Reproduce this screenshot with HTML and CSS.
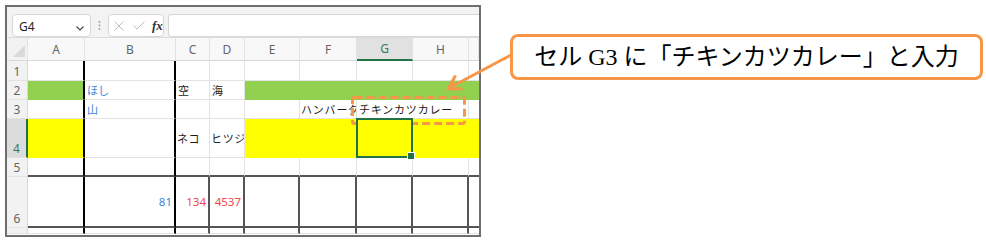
FILE: index.html
```html
<!DOCTYPE html>
<html lang="ja">
  <head>
    <meta charset="UTF-8" />
    <meta name="viewport" content="width=device-width, initial-scale=1.0" />
    <title>セル G3 に入力</title>
    <link rel="stylesheet" href="styles.css">
  </head>
  <body>
    <div class="frame">
      <div class="toolbar">
        <div class="namebox">
          <span class="namebox__text">G4</span>
          <svg class="namebox__chevron" width="8" height="5" viewBox="0 0 8 5">
            <polyline points="0.5,0.5 4,4 7.5,0.5" fill="none" stroke="#444" stroke-width="1.1" />
          </svg>
        </div>
        <div class="grip">
          <svg width="3" height="9" viewBox="0 0 3 9">
            <circle cx="1.5" cy="1" r="0.9" fill="#9a9a9a" />
            <circle cx="1.5" cy="4.5" r="0.9" fill="#9a9a9a" />
            <circle cx="1.5" cy="8" r="0.9" fill="#9a9a9a" />
          </svg>
        </div>
        <div class="fxbox">
          <svg width="10" height="10" viewBox="0 0 10 10">
            <path d="M0.5 0.5 L9.5 9.5 M9.5 0.5 L0.5 9.5" stroke="#bdbdbd" stroke-width="1" />
          </svg>
          <svg width="12" height="9" viewBox="0 0 12 9">
            <polyline points="0.5,4.5 4,8 11.5,0.5" fill="none" stroke="#bdbdbd" stroke-width="1" />
          </svg>
          <span class="fxbox__fx">fx</span>
        </div>
        <div class="formula"></div>
      </div>

      <div class="sheet">
        <!-- column headers -->
        <div class="hdr hdr--corner">
          <svg width="12" height="12" viewBox="0 0 12 12"><polygon points="12,0 12,12 0,12" fill="#dadada" /></svg>
        </div>
        <div class="hdr">A</div>
        <div class="hdr">B</div>
        <div class="hdr">C</div>
        <div class="hdr">D</div>
        <div class="hdr">E</div>
        <div class="hdr">F</div>
        <div class="hdr hdr--active">G</div>
        <div class="hdr">H</div>
        <div class="hdr"></div>

        <!-- row 1 -->
        <div class="rh">1</div>
        <div class="cell cell--a"></div>
        <div class="cell cell--b"></div>
        <div class="cell"></div>
        <div class="cell"></div>
        <div class="cell"></div>
        <div class="cell"></div>
        <div class="cell"></div>
        <div class="cell"></div>
        <div class="cell cell--last"></div>

        <!-- row 2 -->
        <div class="rh">2</div>
        <div class="cell cell--green cell--a"></div>
        <div class="cell cell--b cell--blue">ほし</div>
        <div class="cell">空</div>
        <div class="cell">海</div>
        <div class="cell cell--green"></div>
        <div class="cell cell--green"></div>
        <div class="cell cell--green"></div>
        <div class="cell cell--green"></div>
        <div class="cell cell--green cell--last"></div>

        <!-- row 3 -->
        <div class="rh">3</div>
        <div class="cell cell--a"></div>
        <div class="cell cell--b cell--blue">山</div>
        <div class="cell"></div>
        <div class="cell"></div>
        <div class="cell"></div>
        <div class="cell cell--kana">ハンバーグ</div>
        <div class="cell cell--kana cell--spill">チキンカツカレー</div>
        <div class="cell"></div>
        <div class="cell cell--last"></div>

        <!-- row 4 -->
        <div class="rh rh--active">4</div>
        <div class="cell cell--yellow cell--a"></div>
        <div class="cell cell--b"></div>
        <div class="cell cell--kana">ネコ</div>
        <div class="cell cell--kana">ヒツジ</div>
        <div class="cell cell--yellow"></div>
        <div class="cell cell--yellow"></div>
        <div class="cell cell--yellow cell--active"></div>
        <div class="cell cell--yellow"></div>
        <div class="cell cell--yellow cell--last"></div>

        <!-- row 5 -->
        <div class="rh">5</div>
        <div class="cell cell--edge cell--a"></div>
        <div class="cell cell--edge cell--b"></div>
        <div class="cell cell--edge"></div>
        <div class="cell cell--edge"></div>
        <div class="cell cell--edge"></div>
        <div class="cell cell--edge"></div>
        <div class="cell cell--edge"></div>
        <div class="cell cell--edge"></div>
        <div class="cell cell--edge cell--last"></div>

        <!-- row 6 -->
        <div class="rh">6</div>
        <div class="cell cell--boxed cell--a"></div>
        <div class="cell cell--boxed cell--b cell--num cell--blue">81</div>
        <div class="cell cell--boxed cell--num cell--red">134</div>
        <div class="cell cell--boxed cell--num cell--red">4537</div>
        <div class="cell cell--boxed"></div>
        <div class="cell cell--boxed"></div>
        <div class="cell cell--boxed"></div>
        <div class="cell cell--boxed"></div>
        <div class="cell cell--boxed cell--last"></div>

        <!-- row 7 (cut off) -->
        <div class="rh"></div>
        <div class="cell cell--tail cell--a"></div>
        <div class="cell cell--tail cell--b"></div>
        <div class="cell cell--tail"></div>
        <div class="cell cell--tail"></div>
        <div class="cell cell--tail"></div>
        <div class="cell cell--tail"></div>
        <div class="cell cell--tail"></div>
        <div class="cell cell--tail"></div>
        <div class="cell cell--tail cell--last"></div>
      </div>
    </div>

    <div class="callout">セル G3 に「チキンカツカレー」と入力</div>

    <svg class="marks" width="986" height="241" viewBox="0 0 986 241">
      <rect x="352.5" y="97.5" width="112" height="26" rx="2" fill="none"
        stroke="#f79646" stroke-width="3" stroke-dasharray="8 4" />
      <line x1="511" y1="55" x2="449" y2="88" stroke="#f79646" stroke-width="3" />
      <polyline points="455.5,75.5 448.5,88.5 462.5,89" fill="none" stroke="#f79646"
        stroke-width="3" stroke-linejoin="miter" />
    </svg>
  </body>
</html>
```

FILE: styles.css
```css
* {
  margin: 0;
  padding: 0;
  box-sizing: border-box;
}
body {
  background: #fff;
  width: 986px;
  height: 241px;
  overflow: hidden;
  font-family: "Noto Sans CJK JP", sans-serif;
}

.frame {
  margin: 5px 0 0 5px;
  width: 476px;
  height: 232px;
  border: 2px solid #6e6e6e;
  overflow: hidden;
  background: #fff;
}

/* formula bar */
.toolbar {
  display: flex;
  align-items: flex-start;
  height: 31px;
  padding: 7px 0 0 5px;
  background: #f3f3f3;
  border-bottom: 1px solid #dcdcdc;
}
.namebox {
  width: 79px;
  height: 23px;
  display: flex;
  align-items: flex-end;
  justify-content: space-between;
  padding: 0 6px 3px 6px;
  background: #fff;
  border: 1px solid #d6d6d6;
  border-radius: 4px;
}
.namebox__text {
  font-family: "Noto Sans", sans-serif;
  font-size: 12px;
  line-height: 1;
  color: #262626;
}
.namebox__chevron {
  margin-bottom: 2px;
}
.grip {
  width: 17px;
  height: 23px;
  display: flex;
  align-items: center;
  justify-content: center;
}
.fxbox {
  width: 56px;
  height: 23px;
  display: flex;
  align-items: center;
  gap: 9px;
  padding-left: 5px;
  background: #fff;
  border: 1px solid #d6d6d6;
  border-radius: 4px;
}
.fxbox__fx {
  font-family: "Liberation Serif", serif;
  font-style: italic;
  font-weight: bold;
  font-size: 13px;
  line-height: 1;
  color: #333;
  margin-left: -2px;
}
.formula {
  flex: 1;
  height: 23px;
  margin-left: 4px;
  background: #fff;
  border: 1px solid #d6d6d6;
  border-right: none;
  border-radius: 4px 0 0 4px;
}

/* grid */
.sheet {
  display: grid;
  grid-template-columns: 21px 57px 91px 34px 35px 55px 57px 56px 56px 10px;
  grid-template-rows: 23px 20px 19px 19px 39px 19px 51px 6px;
}
.hdr {
  display: flex;
  align-items: center;
  justify-content: center;
  font-family: "Noto Sans", sans-serif;
  font-size: 12px;
  color: #666;
  background: #f8f8f8;
  border-right: 1px solid #e2e2e2;
  border-bottom: 1px solid #d8d8d8;
}
.hdr--corner {
  align-items: flex-end;
  justify-content: flex-end;
  padding: 0 2px 3px 0;
  background: #f2f2f2;
}
.hdr--active {
  background: #e1e1e1;
  color: #3d7a58;
  border-bottom: 2px solid #217346;
}
.rh {
  display: flex;
  align-items: flex-end;
  justify-content: center;
  padding-bottom: 2px;
  font-family: "Noto Sans", sans-serif;
  font-size: 12px;
  line-height: 1;
  color: #666;
  background: #f2f2f2;
  border-right: 1px solid #d8d8d8;
  border-bottom: 1px solid #e2e2e2;
}
.rh--active {
  background: #dcdcdc;
  color: #3d7a58;
  border-right: 2px solid #217346;
}

.cell {
  display: flex;
  align-items: center;
  padding: 0 2px;
  overflow: hidden;
  white-space: nowrap;
  font-size: 11px;
  line-height: 1;
  color: #1a1a1a;
  border-right: 1px solid #e2e2e2;
  border-bottom: 1px solid #e2e2e2;
}
.cell--kana {
  letter-spacing: 0.8px;
  padding-left: 1px;
}
.cell--spill {
  overflow: visible;
  position: relative;
  z-index: 1;
  padding-left: 2px;
  border-right-color: transparent;
}
.cell--blue {
  color: #3a87d6;
}
.cell--red {
  color: #f0464b;
}
.cell--num {
  justify-content: flex-end;
  font-family: "Noto Sans", sans-serif;
  font-size: 11.5px;
}
.cell--green {
  background: #92d050;
  border-color: #92d050;
}
.cell--yellow {
  background: #ffff00;
  border-color: #ffff00;
}
.cell--edge {
  border-bottom: 2px solid #555;
}
.cell--boxed {
  border-right: 2px solid #555;
  border-bottom: 2px solid #555;
}
.cell--tail {
  border-right: 2px solid #555;
}
.cell--a,
.cell--b {
  border-right: 2px solid #000;
}
.cell--last {
  border-right: none;
}
.cell--active {
  position: relative;
  z-index: 2;
  overflow: visible;
}
.cell--active::before {
  content: "";
  position: absolute;
  inset: -1px;
  border: 2px solid #217346;
}
.cell--active::after {
  content: "";
  position: absolute;
  right: -3px;
  bottom: -3px;
  width: 6px;
  height: 6px;
  background: #217346;
  border: 1px solid #fff;
}

/* annotation */
.callout {
  position: absolute;
  left: 510px;
  top: 34px;
  width: 473px;
  height: 46px;
  display: flex;
  align-items: center;
  justify-content: center;
  background: #fff;
  border: 3px solid #f79646;
  border-radius: 8px;
  font-family: "Liberation Serif", "Noto Sans CJK JP", serif;
  font-size: 24px;
  line-height: 1;
  color: #000;
  white-space: nowrap;
}
.marks {
  position: absolute;
  left: 0;
  top: 0;
  pointer-events: none;
}
```
